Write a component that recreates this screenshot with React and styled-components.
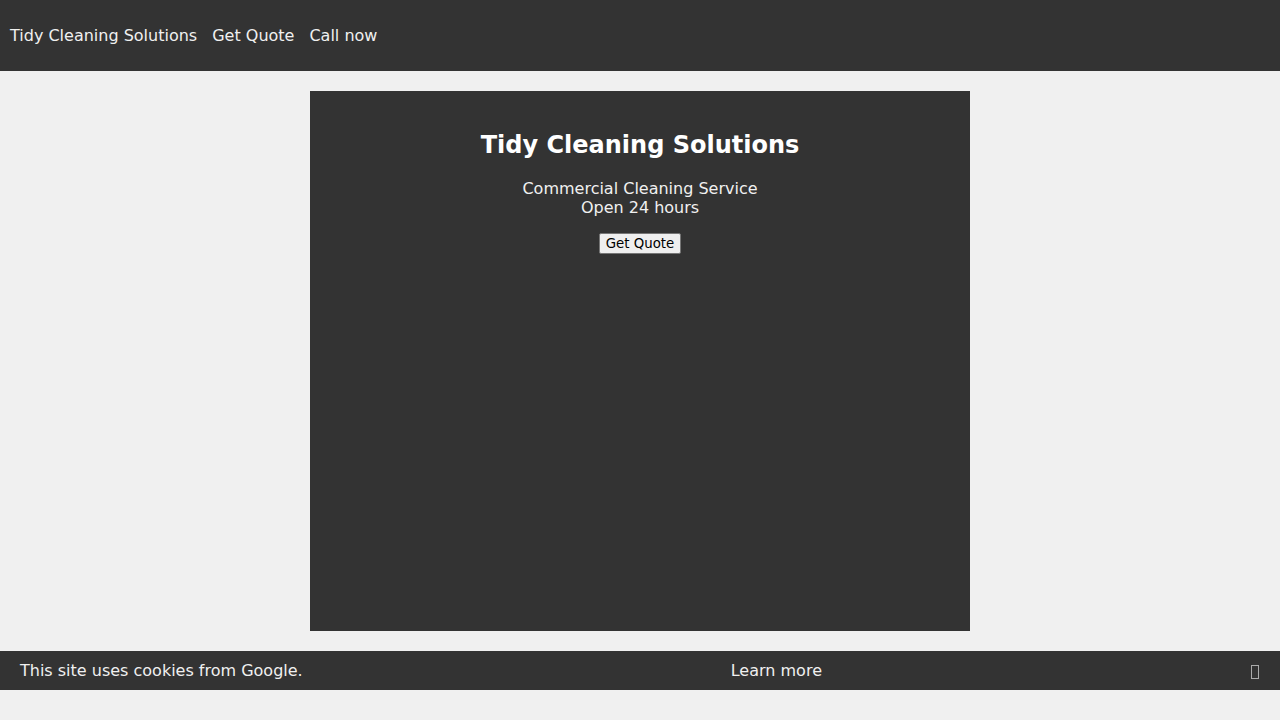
import React from "react";
import styled, { createGlobalStyle } from "styled-components";

const Global = createGlobalStyle`
  html, body { margin: 0; padding: 0; }
  body {
    background: #f0f0f0;
    font-family: "DejaVu Sans", sans-serif;
    font-size: 16px;
    color: #f0f0f0;
  }
`;

const Page = styled.div`
  display: flex;
  flex-direction: column;
  min-height: 720px;
`;

const Header = styled.header`
  height: 71px;
  background: #333;
  display: flex;
  align-items: center;
  padding: 0 0 0 10px;
  gap: 15px;
`;

const NavLink = styled.a`
  color: #f0f0f0;
  text-decoration: none;
  font-size: 16px;
`;

const Main = styled.main`
  display: flex;
  justify-content: center;
  padding: 20px 0;
`;

const Card = styled.section`
  width: 660px;
  height: 540px;
  background: #333;
  display: flex;
  flex-direction: column;
  align-items: center;
  padding-top: 38px;
  box-sizing: border-box;
`;

const Title = styled.h1`
  margin: 0;
  font-size: 24px;
  font-weight: bold;
  color: #fff;
  line-height: 32px;
`;

const Sub = styled.p`
  margin: 18px 0 0;
  text-align: center;
  font-size: 16px;
  line-height: 19px;
`;

const QuoteButton = styled.button`
  margin-top: 16px;
  font-family: "DejaVu Sans", sans-serif;
  font-size: 13.333px;
  line-height: 15px;
  color: #000;
  background: #efefef;
  border: 1px solid #767676;
  border-radius: 2px;
  padding: 2px 6px;
`;

const CookieBar = styled.div`
  height: 39px;
  background: #333;
  display: flex;
  align-items: center;
  justify-content: space-between;
  padding: 0 20px;
  font-size: 16px;
`;

const LearnMore = styled.a`
  color: #f0f0f0;
  text-decoration: none;
`;

const Tofu = styled.span`
  display: inline-block;
  width: 6px;
  height: 12px;
  border: 1px solid #aaa;
  margin: 2px 1px 0 1px;
`;

export default function App() {
  return (
    <>
      <Global />
      <Page>
        <Header>
          <NavLink href="#">Tidy Cleaning Solutions</NavLink>
          <NavLink href="#">Get Quote</NavLink>
          <NavLink href="#">Call now</NavLink>
        </Header>
        <Main>
          <Card>
            <Title>Tidy Cleaning Solutions</Title>
            <Sub>
              Commercial Cleaning Service
              <br />
              Open 24 hours
            </Sub>
            <QuoteButton>Get Quote</QuoteButton>
          </Card>
        </Main>
        <CookieBar>
          <span>This site uses cookies from Google.</span>
          <LearnMore href="#">Learn more</LearnMore>
          <Tofu />
        </CookieBar>
      </Page>
    </>
  );
}
